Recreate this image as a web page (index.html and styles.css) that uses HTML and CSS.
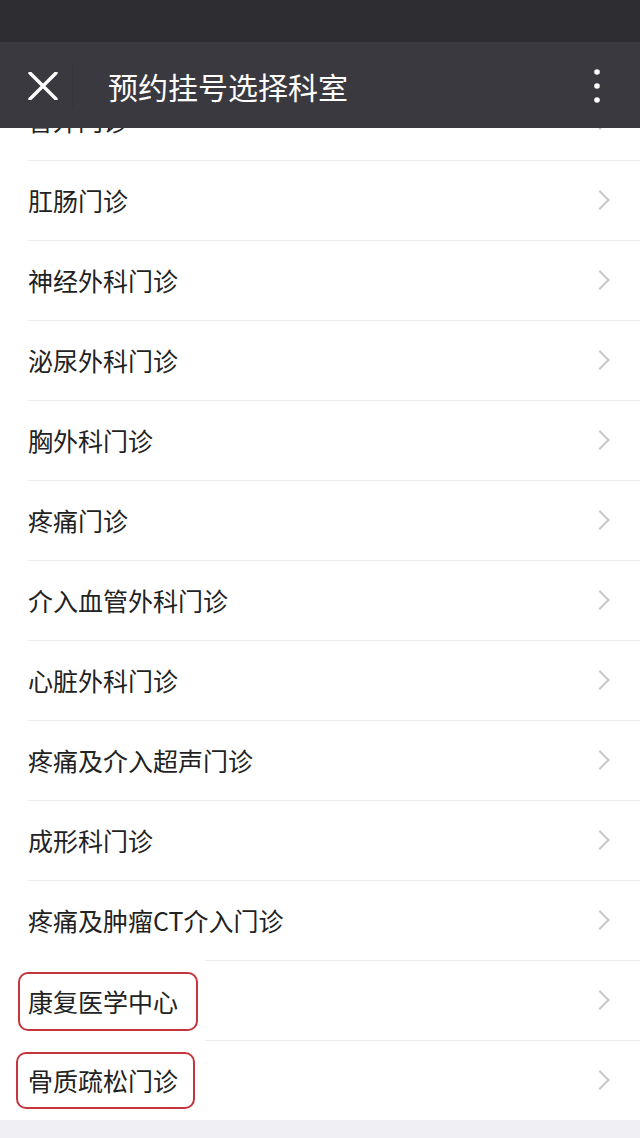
FILE: index.html
```html
<!DOCTYPE html>
<html>

<head>
    <meta charset="UTF-8">
    <title>预约挂号选择科室</title>
    <link rel="stylesheet" href="styles.css">
</head>

<body>

    <div class="topbar">
        <div class="statusbar"></div>
        <div class="navbar">
            <svg class="close" width="30" height="28" viewBox="0 0 30 28">
                <path d="M2 1 L28 27 M28 1 L2 27" stroke="#fff" stroke-width="3.4" stroke-linecap="round" fill="none" />
            </svg>
            <span class="divider"></span>
            <span class="title">预约挂号选择科室</span>
            <svg class="more" width="8" height="36" viewBox="0 0 8 36">
                <circle cx="4" cy="4" r="2.8" fill="#fff" />
                <circle cx="4" cy="18" r="2.8" fill="#fff" />
                <circle cx="4" cy="32" r="2.8" fill="#fff" />
            </svg>
        </div>
    </div>

    <ul class="list">
        <li class="row first"><span>普外门诊</span><i class="arrow"></i></li>
        <li class="row"><span>肛肠门诊</span><i class="arrow"></i></li>
        <li class="row"><span>神经外科门诊</span><i class="arrow"></i></li>
        <li class="row"><span>泌尿外科门诊</span><i class="arrow"></i></li>
        <li class="row"><span>胸外科门诊</span><i class="arrow"></i></li>
        <li class="row"><span>疼痛门诊</span><i class="arrow"></i></li>
        <li class="row"><span>介入血管外科门诊</span><i class="arrow"></i></li>
        <li class="row"><span>心脏外科门诊</span><i class="arrow"></i></li>
        <li class="row"><span>疼痛及介入超声门诊</span><i class="arrow"></i></li>
        <li class="row"><span>成形科门诊</span><i class="arrow"></i></li>
        <li class="row"><span>疼痛及肿瘤CT介入门诊</span><i class="arrow"></i></li>
        <li class="row marked"><span class="mark">康复医学中心</span><i class="arrow"></i></li>
        <li class="row marked"><span class="mark mark2">骨质疏松门诊</span><i class="arrow"></i></li>
    </ul>

</body>

</html>
```

FILE: styles.css
```css
body {
    margin: 0;
    background: #efeff4;
    font-family: "Noto Sans CJK SC", "Noto Sans", sans-serif;
}

/* top bars lie over the scrolled list */
.topbar {
    position: fixed;
    top: 0;
    left: 0;
    right: 0;
    z-index: 2;
}

.statusbar {
    height: 42px;
    background: #2e2d32;
}

.navbar {
    height: 86px;
    background: #3a393f;
    display: flex;
    align-items: center;
    padding: 0 28px;
}

.close {
    display: block;
    margin-top: 1px;
}

.divider {
    width: 1px;
    height: 46px;
    background: #36353a;
    margin: 0 0 0 14px;
}

.title {
    color: #fff;
    font-size: 30px;
    margin-left: 35px;
    flex: 1;
    line-height: 1;
    margin-top: 2px;
}

.more {
    display: block;
    margin-right: 11px;
    margin-top: 2px;
}

.list {
    list-style: none;
    margin: 80px 0 0 0;
    padding: 0;
    background: #fff;
}

.row {
    position: relative;
    height: 80px;
    display: flex;
    align-items: center;
    padding: 0 29px 0 28px;
    font-size: 25px;
    color: #222;
    line-height: 35px;
}

.row span {
    flex: 1;
}

.row::before {
    content: "";
    position: absolute;
    top: 0;
    left: 28px;
    right: 0;
    height: 1px;
    background: #ededed;
}

.row.first::before {
    display: none;
}

.row.marked::before {
    left: 205px;
}

.row span.mark {
    flex: none;
    margin-left: -10px;
    padding: 10px 18px 10px 8px;
    border: 2px solid #c4353d;
    border-radius: 10px;
    margin-top: 2px;
}

.row span.mark2 {
    margin-left: -12px;
    padding: 9px 15px 9px 10px;
    margin-top: 0;
}

.row .mark + .arrow {
    margin-left: auto;
}

.arrow {
    display: block;
    width: 12px;
    height: 12px;
    border-right: 2px solid #c8c8cc;
    border-top: 2px solid #c8c8cc;
    transform: rotate(45deg);
    margin-right: 4px;
}
```
